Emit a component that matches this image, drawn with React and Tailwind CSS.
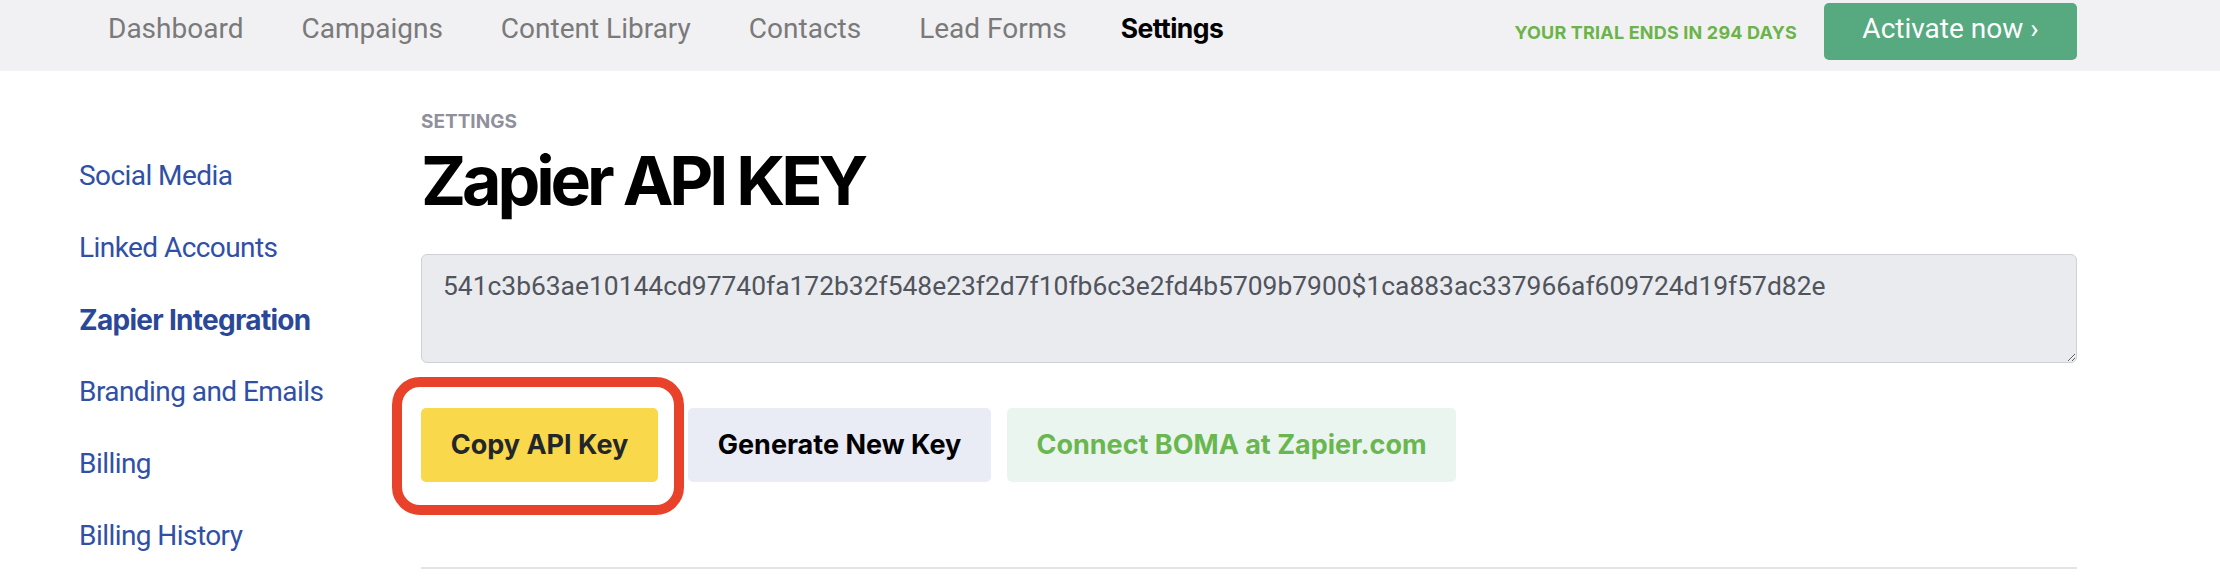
import React from "react";

const navItems = ["Dashboard", "Campaigns", "Content Library", "Contacts", "Lead Forms", "Settings"];

const sideItems = [
  { label: "Social Media" },
  { label: "Linked Accounts" },
  { label: "Zapier Integration", active: true },
  { label: "Branding and Emails" },
  { label: "Billing" },
  { label: "Billing History" },
];

const apiKey =
  "541c3b63ae10144cd97740fa172b32f548e23f2d7f10fb6c3e2fd4b5709b7900$1ca883ac337966af609724d19f57d82e";

const App = () => {
  return (
    <div className="min-h-screen w-full bg-white font-['Roboto',sans-serif]">
      {/* Top nav */}
      <div className="h-[71px] bg-[#f1f1f3] flex items-start justify-between pl-[108px] pr-[143px]">
        <div className="flex gap-[58px] pt-[12px]">
          {navItems.map((item) => (
            <span
              key={item}
              className={
                item === "Settings"
                  ? "-ml-[4px] text-[26.5px] leading-[33px] font-bold text-black font-['Inter',sans-serif] tracking-[-0.02em]"
                  : "text-[28px] leading-[33px] text-[#7a7a7a]"
              }
            >
              {item}
            </span>
          ))}
        </div>
        <div className="flex items-center gap-[27px] pt-[3px]">
          <span className="text-[18px] font-bold text-[#6bb34a] font-['Inter',sans-serif] tracking-[0.01em] pt-[2px]">
            YOUR TRIAL ENDS IN 294 DAYS
          </span>
          <button className="h-[57px] w-[253px] rounded-[5px] bg-[#57a980] text-white text-[28px] leading-[33px] pb-[6px] flex items-center justify-center">
            Activate now ›
          </button>
        </div>
      </div>

      {/* Body */}
      <div className="flex">
        {/* Sidebar */}
        <div className="w-[421px] shrink-0 pl-[79px] pt-[69px] flex flex-col">
          {sideItems.map((s) => (
            <span
              key={s.label}
              className={
                s.active
                  ? "text-[28px] leading-[72px] font-bold text-[#2b4798] font-['Inter',sans-serif] tracking-[-0.025em]"
                  : "text-[28px] leading-[72px] text-[#3050a5] tracking-[-0.02em]"
              }
            >
              {s.label}
            </span>
          ))}
        </div>

        {/* Main */}
        <div className="w-[1656px] pt-[41px] font-['Inter',sans-serif]">
          <div className="text-[19px] leading-[19px] font-bold text-[#8f909c]">SETTINGS</div>
          <h1 className="mt-[15px] text-[68px] leading-[68px] font-bold text-black tracking-[-0.06em]">
            Zapier API KEY
          </h1>
          <textarea
            readOnly
            defaultValue={apiKey}
            className="block mt-[40px] w-full h-[109px] bg-[#eaebef] border border-[#cfd1d6] rounded-[6px] pl-[21px] pr-[21px] pt-[13px] text-[26.4px] leading-[36px] text-[#50545c] font-['Roboto',sans-serif] outline-none resize-y"
          />
          <div className="mt-[45px] flex items-center">
            <div className="relative">
              <button className="w-[237px] h-[74px] rounded-[5px] bg-[#f9d94b] text-[27px] font-bold text-[#23262b] flex items-center justify-center">
                Copy API Key
              </button>
              <div className="absolute -left-[29px] -top-[31px] w-[292px] h-[138px] border-[10px] border-[#e9422b] rounded-[28px] pointer-events-none" />
            </div>
            <button className="ml-[30px] w-[303px] h-[74px] rounded-[5px] bg-[#e9ecf4] text-[27px] font-bold text-black flex items-center justify-center">
              Generate New Key
            </button>
            <button className="ml-[16px] w-[449px] h-[74px] rounded-[5px] bg-[#ebf5f0] text-[27px] font-bold text-[#6ab750] flex items-center justify-center">
              Connect BOMA at Zapier.com
            </button>
          </div>
          <div className="mt-[85px] h-[2px] bg-[#e5e5e5]" />
        </div>
      </div>
    </div>
  );
};

export default App;
